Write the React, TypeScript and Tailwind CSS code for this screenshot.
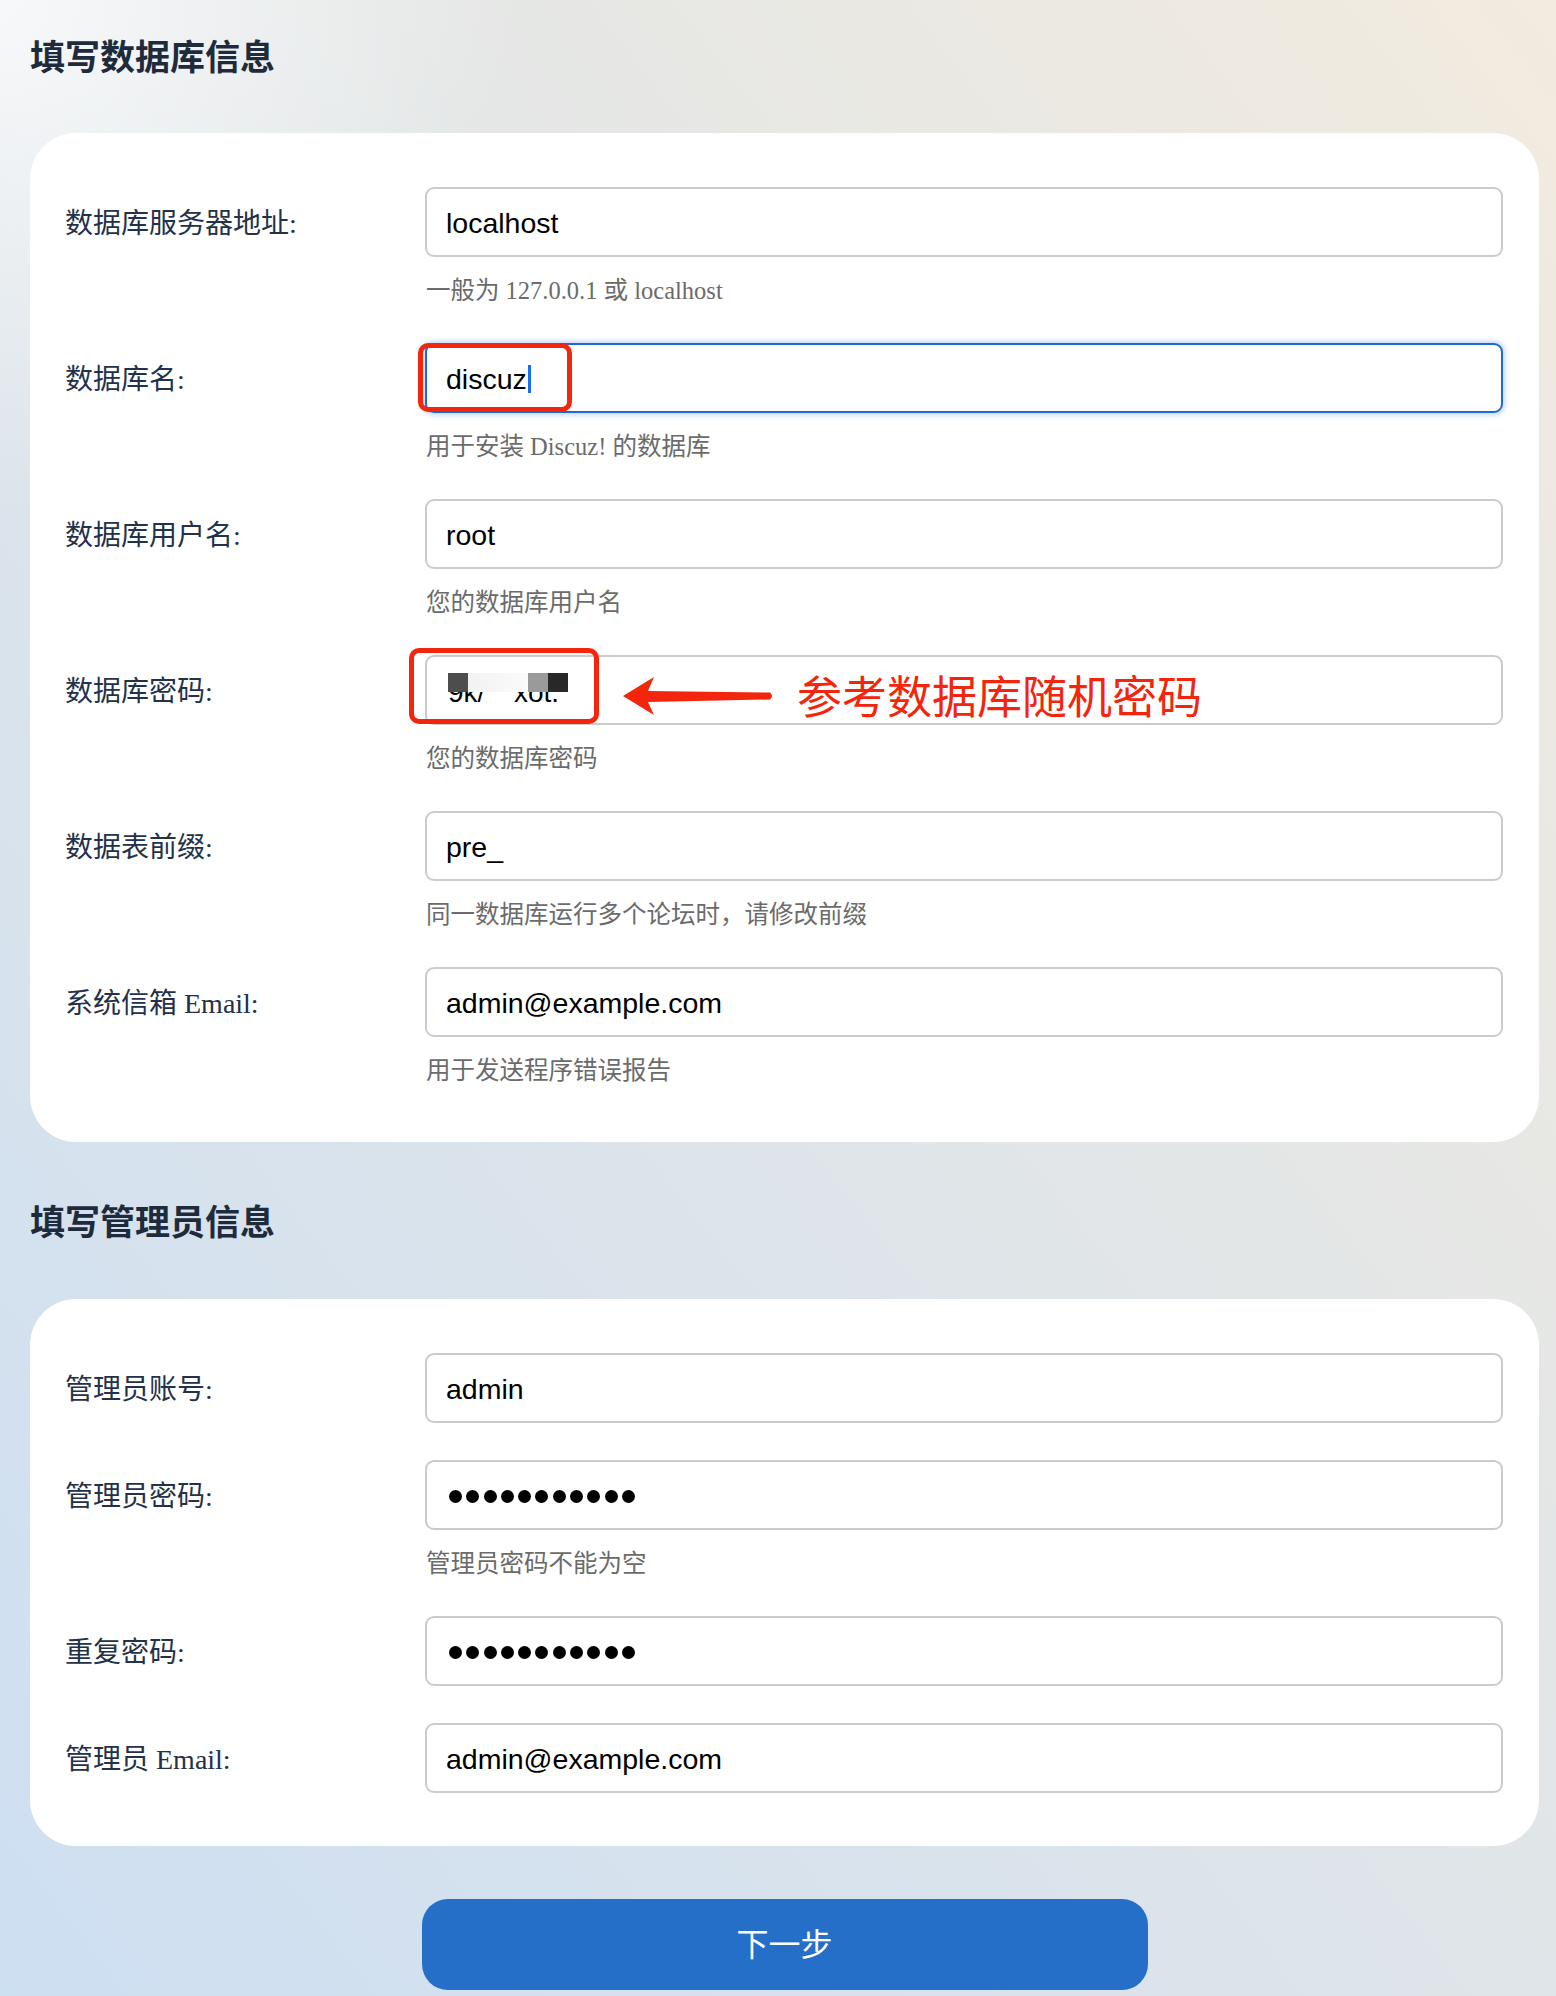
const serif = "font-['Liberation_Serif','Noto_Sans_CJK_SC',serif]";
const sans = "font-['Liberation_Sans','Noto_Sans_CJK_SC',sans-serif]";

type Field = {
  label: string;
  value?: string;
  help?: string;
  kind?: "text" | "focus" | "masked" | "dots";
};

const dbFields: Field[] = [
  { label: "数据库服务器地址:", value: "localhost", help: "一般为 127.0.0.1 或 localhost" },
  { label: "数据库名:", value: "discuz", help: "用于安装 Discuz! 的数据库", kind: "focus" },
  { label: "数据库用户名:", value: "root", help: "您的数据库用户名" },
  { label: "数据库密码:", help: "您的数据库密码", kind: "masked" },
  { label: "数据表前缀:", value: "pre_", help: "同一数据库运行多个论坛时，请修改前缀" },
  { label: "系统信箱 Email:", value: "admin@example.com", help: "用于发送程序错误报告" },
];

const adminFields: Field[] = [
  { label: "管理员账号:", value: "admin" },
  { label: "管理员密码:", help: "管理员密码不能为空", kind: "dots" },
  { label: "重复密码:", kind: "dots" },
  { label: "管理员 Email:", value: "admin@example.com" },
];

function Dots() {
  return (
    <div className="flex items-center gap-[4.3px] pl-[3px]">
      {Array.from({ length: 11 }).map((_, i) => (
        <span key={i} className="block h-[13px] w-[13px] rounded-full bg-black" />
      ))}
    </div>
  );
}

function Masked() {
  return (
    <div className="relative h-[30px] w-[130px]">
      <span className="absolute left-[2px] top-[2px] text-[28px] leading-[30px] text-black">9k/</span>
      <span className="absolute left-[68px] top-[2px] text-[28px] leading-[30px] text-black">xot.</span>
      <div className="absolute left-[2px] top-[-3px] flex h-[19px]">
        <span className="w-[20px] bg-[#4d4d4d]" />
        <span className="w-[60px] bg-[linear-gradient(to_right,#f2f2f2,#fbfbfb)]" />
        <span className="w-[20px] bg-[#9a9a9a]" />
        <span className="w-[20px] bg-[#282828]" />
      </div>
    </div>
  );
}

function Row({ f }: { f: Field }) {
  const focus = f.kind === "focus";
  return (
    <div className="flex">
      <div className={`flex h-[70px] w-[360px] shrink-0 items-center pt-[3px] ${serif} text-[28px] text-[#24314a]`}>
        {f.label}
      </div>
      <div className="min-w-0 flex-1">
        <div
          className={`flex h-[70px] items-center rounded-[9px] bg-white pl-[19px] pt-[2px] ${sans} text-[28.5px] text-black ${
            focus
              ? "border-2 border-[#1d6ad6] shadow-[0_0_5px_2px_rgba(80,140,230,0.35)]"
              : "border-2 border-[#cbcbcb]"
          }`}
        >
          {f.kind === "dots" ? (
            <Dots />
          ) : f.kind === "masked" ? (
            <Masked />
          ) : (
            <>
              <span>{f.value}</span>
              {focus && <span className="ml-[1px] h-[28px] w-[3px] bg-[#1a6cf0]" />}
            </>
          )}
        </div>
        {f.help && (
          <p className={`mt-[18px] h-[31px] pl-[1px] ${serif} text-[24.5px] leading-[32px] text-[#6b6b6b]`}>
            {f.help}
          </p>
        )}
      </div>
    </div>
  );
}

function Arrow() {
  return (
    <svg width="152" height="40" viewBox="0 0 152 40">
      <path
        d="M0 19 L31 0 L25 14 L147 15.5 Q151 19 147 22.5 L25 25 L31 38 Z"
        fill="#f3250d"
      />
    </svg>
  );
}

export default function App() {
  return (
    <div className="min-h-[1996px] w-full bg-[radial-gradient(circle_at_0_0,rgba(255,255,255,0.75),rgba(255,255,255,0)_520px),linear-gradient(to_top_right,#cddff2,#f2ebdf)]">
      <div className="ml-[30px] w-[1509px] pt-[35px] pb-[5px]">
        <h2 className={`h-[48px] ${serif} text-[35px] font-bold leading-[48px] text-[#1e2b3c]`}>
          填写数据库信息
        </h2>
        <section className="relative mt-[50px] flex flex-col gap-[37px] rounded-[46px] bg-white pt-[54px] pb-[56px] pl-[35px] pr-[36px]">
          {dbFields.map((f) => (
            <Row key={f.label} f={f} />
          ))}
          {/* annotation marks */}
          <div className="absolute left-[388px] top-[210px] h-[69px] w-[154px] rounded-[10px] border-[5px] border-[#f3250d]" />
          <div className="absolute left-[379px] top-[515px] h-[76px] w-[190px] rounded-[10px] border-[5px] border-[#f3250d]" />
          <div className="absolute left-[593px] top-[544px]">
            <Arrow />
          </div>
          <div className="absolute left-[767px] top-[530px] font-['Noto_Sans_CJK_SC',sans-serif] text-[45px] leading-[64px] text-[#f3250d]">
            参考数据库随机密码
          </div>
        </section>

        <h2 className={`mt-[58px] h-[48px] ${serif} text-[35px] font-bold leading-[48px] text-[#1e2b3c]`}>
          填写管理员信息
        </h2>
        <section className="mt-[51px] flex flex-col gap-[37px] rounded-[46px] bg-white pt-[54px] pb-[53px] pl-[35px] pr-[36px]">
          {adminFields.map((f) => (
            <Row key={f.label} f={f} />
          ))}
        </section>

        <button
          className={`mx-auto mt-[53px] flex h-[91px] w-[726px] items-center justify-center rounded-[26px] bg-[#256fc8] ${sans} text-[32px] text-white`}
        >
          下一步
        </button>
      </div>
    </div>
  );
}
